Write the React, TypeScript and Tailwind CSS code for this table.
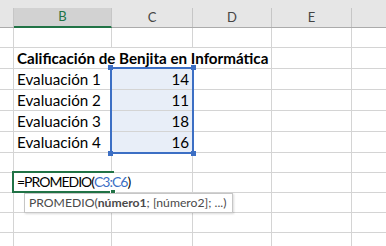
import type { ReactNode } from "react"

const cols = [
  { key: "", w: "w-[14px]" },
  { key: "B", w: "w-[98px]" },
  { key: "C", w: "w-[81px]" },
  { key: "D", w: "w-[79px]" },
  { key: "E", w: "w-[80px]" },
  { key: "", w: "flex-1" },
]

const rowHeights = ["h-[20px]", "h-[21px]", "h-[21px]", "h-[21px]", "h-[21px]", "h-[21px]", "h-[20px]", "h-[20px]", "h-[20px]", "h-[20px]", "h-[20px]"]

// open: text spills into the next cell, so no gridline on the right
type Cell = { text?: ReactNode; right?: boolean; bold?: boolean; picked?: boolean; tight?: boolean; open?: boolean }

const evals: [string, number][] = [
  ["Evaluación 1", 14],
  ["Evaluación 2", 11],
  ["Evaluación 3", 18],
  ["Evaluación 4", 16],
]

const buildRows = (): Record<number, Cell>[] => {
  const rows: Record<number, Cell>[] = rowHeights.map(() => ({}))
  rows[1] = {
    1: { text: "Calificación de Benjita en Informática", bold: true, open: true },
    2: { open: true },
  }
  evals.forEach(([label, score], i) => {
    rows[2 + i] = { 1: { text: label }, 2: { text: score, right: true, picked: true } }
  })
  rows[7] = {
    1: {
      tight: true,
      open: true,
      text: (
        <>
          =PROMEDIO(<span className="text-[#3c6fc4]">C3:C6</span>
          <span className="inline-block w-px h-[15px] bg-black align-[-3px]" />)
        </>
      ),
    },
  }
  return rows
}

const HeaderRow = () => (
  <div className="bg-[#e6e6e6]">
    <div className="h-[8px]" />
    <div className="flex h-[20px] border-b border-[#ababab]">
      {cols.map((c, i) => (
        <div
          key={i}
          className={
            c.w +
            " shrink-0 flex items-center justify-center text-[13px] " +
            (i < cols.length - 1 ? "border-r border-[#c6c6c6] " : "") +
            (c.key === "B" ? "bg-[#d2d2d2] text-[#217346] border-b-2 border-b-[#217346] -mb-px" : "text-[#444]")
          }
        >
          {c.key}
        </div>
      ))}
    </div>
  </div>
)

const Sheet = () => {
  const rows = buildRows()
  return (
    <div>
      {rows.map((row, r) => (
        <div key={r} className={"flex " + rowHeights[r]}>
          {cols.map((c, i) => {
            const cell = row[i]
            return (
              <div
                key={i}
                className={
                  c.w +
                  " shrink-0 border-b border-[#d4d4d4] flex items-end pb-[1px] px-[3px] whitespace-nowrap leading-[18px] text-black " +
                  (i < cols.length - 1 ? (cell?.open ? "border-r border-r-transparent " : "border-r ") : "") +
                  (cell?.tight ? "text-[14px] tracking-[-1px] " : "text-[15.2px] ") +
                  (cell?.right ? "justify-end " : "") +
                  (cell?.bold ? "font-bold " : "") +
                  (cell?.picked ? "bg-[#e8eef8]" : "")
                }
              >
                {cell?.text}
              </div>
            )
          })}
        </div>
      ))}
    </div>
  )
}

const Handle = ({ className }: { className: string }) => (
  <div className={"absolute w-[5px] h-[5px] bg-[#3c6fc4] " + className} />
)

export default function App() {
  return (
    <div className="relative w-[386px] h-[246px] overflow-hidden bg-white font-['Lato','Noto_Sans',sans-serif]">
      <HeaderRow />
      <Sheet />

      {/* range reference C3:C6 */}
      <div className="absolute left-[110px] top-[67px] w-[84px] h-[87px] border-2 border-[#3c6fc4]">
        <Handle className="-left-[4px] -top-[4px]" />
        <Handle className="-right-[4px] -top-[4px]" />
        <Handle className="-left-[4px] -bottom-[4px]" />
        <Handle className="-right-[4px] -bottom-[4px]" />
      </div>

      {/* active cell, right edge hidden under the overflowing formula */}
      <div className="absolute left-[12px] top-[171px] w-[102px] h-[22px] border-2 border-r-0 border-[#217346]">
        <div className="absolute -right-[2px] -bottom-[4px] w-[6px] h-[6px] bg-[#217346] border border-white" />
      </div>

      {/* function argument hint */}
      <div className="absolute left-[24px] top-[193px] w-[209px] h-[20px] bg-white border border-[#c6c6c6] shadow-[1px_1px_2px_rgba(0,0,0,0.15)] flex items-center px-[4px] text-[12.2px] text-[#4a4a4a] whitespace-nowrap">
        PROMEDIO(<span className="font-bold">número1</span>; [número2]; ...)
      </div>
    </div>
  )
}
